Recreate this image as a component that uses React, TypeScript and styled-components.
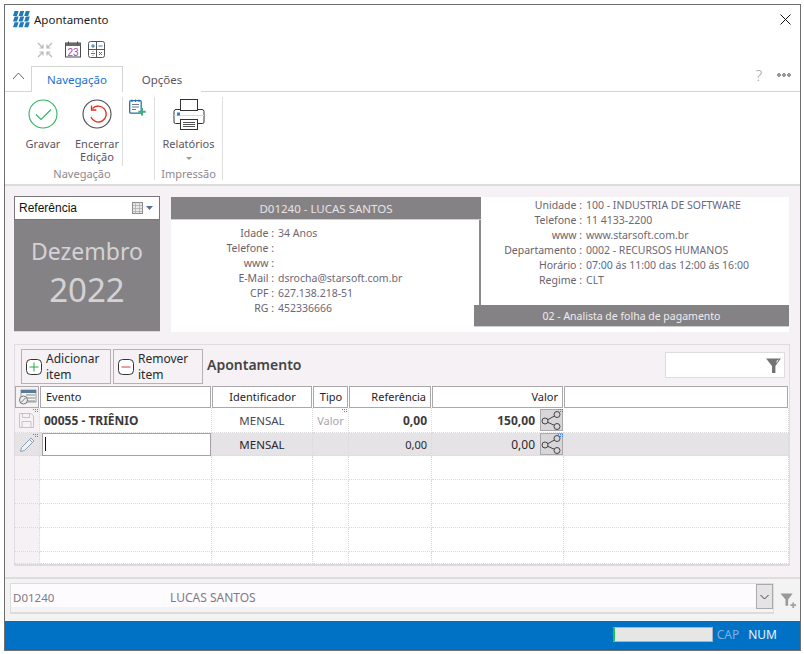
import React from "react";
import styled, { createGlobalStyle } from "styled-components";

const Global = createGlobalStyle`
  html, body { margin: 0; padding: 0; background: #fff; }
  body { font-family: "Noto Sans", "Open Sans", sans-serif; }
  * { box-sizing: border-box; }
  svg { flex: none; display: block; }
`;

const F = `"Noto Sans", "Open Sans", sans-serif`;
const L = `"Liberation Sans", Arial, sans-serif`;

const Page = styled.div`
  width: 804px;
  height: 654px;
  padding: 4px 3px 3px 4px;
`;
const Win = styled.div`
  width: 797px;
  height: 647px;
  border: 1px solid #6e6e6e;
  display: flex;
  flex-direction: column;
  background: #fff;
  font-family: ${F};
  overflow: hidden;
`;
const TitleBar = styled.div`
  height: 30px;
  display: flex;
  align-items: center;
  padding: 0 9px 2px 8px;
  font-size: 11.5px;
  color: #1a1a1a;
  gap: 4px;
`;
const TitleText = styled.span`
  flex: 1;
`;
const Qat = styled.div`
  height: 26px;
  display: flex;
  align-items: center;
  padding: 3px 0 0 32px;
  gap: 6px;
  & > :nth-child(2) {
    margin-left: 6px;
  }
`;
const TabStrip = styled.div`
  height: 31px;
  padding-top: 4px;
  display: flex;
  align-items: flex-end;
  border-bottom: 1px solid #d4d4d4;
`;
const Collapse = styled.div`
  width: 26px;
  height: 26px;
  display: flex;
  align-items: center;
  justify-content: center;
  padding-bottom: 4px;
`;
const Tab = styled.div<{ $active?: boolean }>`
  height: 26px;
  width: ${(p) => (p.$active ? "92px" : "78px")};
  display: flex;
  align-items: center;
  justify-content: center;
  font-size: 11.5px;
  color: ${(p) => (p.$active ? "#1a6fd0" : "#5a5560")};
  background: #fff;
  border: ${(p) => (p.$active ? "1px solid #d4d4d4" : "none")};
  border-bottom: none;
  margin-bottom: -1px;
`;
const TabRight = styled.div`
  margin-left: auto;
  height: 26px;
  display: flex;
  align-items: center;
  gap: 15px;
  padding: 0 9px 6px 0;
  color: #a0a0a0;
  font-size: 15px;
  font-weight: 300;
`;
const Ribbon = styled.div`
  height: 94px;
  display: flex;
  border-bottom: 2px solid #dcdcdc;
  padding-top: 5px;
  font-size: 11px;
  color: #5b5560;
`;
const Group = styled.div<{ $w: number; $open?: boolean }>`
  width: ${(p) => p.$w}px;
  height: 83px;
  border-right: ${(p) => (p.$open ? "none" : "1px solid #dedede")};
  display: flex;
  flex-direction: column;
`;
const GroupBody = styled.div<{ $divided?: boolean; $pad?: number }>`
  flex: 1;
  display: flex;
  min-height: 0;
  padding-left: ${(p) => p.$pad || 0}px;
  border-right: ${(p) => (p.$divided ? "1px solid #dedede" : "none")};
`;
const GroupLabel = styled.div<{ $shift?: number }>`
  height: 14px;
  text-align: center;
  color: #8e888e;
  font-size: 11px;
  line-height: 16px;
  padding-left: ${(p) => p.$shift || 0}px;
  white-space: nowrap;
`;
const RibbonBtn = styled.div<{ $w: number; $gap?: number }>`
  width: ${(p) => p.$w}px;
  margin-left: ${(p) => p.$gap || 0}px;
  display: flex;
  flex-direction: column;
  align-items: center;
  text-align: center;
  line-height: 13px;
  padding-top: 2px;
`;
const BtnIcon = styled.div`
  height: 30px;
  margin-bottom: 8px;
  display: flex;
  align-items: center;
  justify-content: center;
`;
const Caret = styled.div`
  width: 0;
  height: 0;
  margin-top: 7px;
  border-left: 3px solid transparent;
  border-right: 3px solid transparent;
  border-top: 3px solid #9a9a9a;
`;
const SmallTool = styled.div`
  width: 32px;
  height: 83px;
  border-right: 1px solid #dedede;
  padding: 2px 0 0 6px;
`;
const Content = styled.div`
  flex: 1;
  background: #f5f1f5;
  padding: 10px 11px 0 9px;
  display: flex;
  flex-direction: column;
  min-height: 0;
`;
const TopRow = styled.div`
  display: flex;
  gap: 11px;
  height: 136px;
`;
const DateCol = styled.div`
  width: 146px;
  display: flex;
  flex-direction: column;
`;
const RefSelect = styled.div`
  height: 24px;
  background: #fff;
  border: 1px solid #7a767a;
  display: flex;
  align-items: center;
  justify-content: space-between;
  padding: 0 4px;
  font-family: ${L};
  font-size: 12px;
  color: #111;
`;
const Month = styled.div`
  flex: 1;
  background: #858285;
  border-bottom: 1px solid #d8d8d8;
  color: #d4d2d4;
  display: flex;
  flex-direction: column;
  align-items: center;
  padding-top: 16px;
  font-size: 23px;
  line-height: 30px;
`;
const Year = styled.div`
  font-size: 33px;
  line-height: 44px;
  margin-top: 2px;
`;
const InfoGrid = styled.div`
  width: 618px;
  margin-top: 1px;
  background: #fff;
  display: grid;
  grid-template-columns: 303px 5px 2px 1fr;
  grid-template-rows: 7px 16px 85px 22px 5px;
  height: 135px;
`;
const NameHeader = styled.div`
  grid-column: 1 / 4;
  grid-row: 1 / 3;
  background: #858285;
  border-bottom: 1px solid #cfcfcf;
  color: #e6e4e6;
  font-size: 11.5px;
  line-height: 23px;
  text-align: center;
`;
const Divider = styled.div`
  grid-column: 3;
  grid-row: 3;
  background: #8c898c;
`;
const PersonInfo = styled.div`
  grid-column: 1;
  grid-row: 3 / 6;
  padding-top: 6px;
`;
const CompanyInfo = styled.div`
  grid-column: 4;
  grid-row: 1 / 4;
  padding-top: 1px;
`;
const JobFooter = styled.div`
  grid-column: 2 / 5;
  grid-row: 4;
  background: #858285;
  border-bottom: 1px solid #cfcfcf;
  color: #eeecee;
  font-size: 10.5px;
  line-height: 23px;
  text-align: center;
`;
const InfoRow = styled.div`
  height: 15px;
  display: flex;
  font-size: 10.5px;
  line-height: 15px;
  white-space: nowrap;
`;
const InfoLabel = styled.span<{ $w: number }>`
  width: ${(p) => p.$w}px;
  text-align: right;
  color: #6a626c;
  padding-right: 4px;
  flex: none;
`;
const InfoValue = styled.span`
  color: #6c6878;
`;
const TimeBlue = styled.span`
  color: #4d6c9e;
`;
const Panel = styled.div`
  margin-top: 12px;
  height: 222px;
  width: 776px;
  border: 1px solid #dfdcdf;
  border-bottom: none;
  display: flex;
  flex-direction: column;
`;
const Toolbar = styled.div`
  height: 41px;
  display: flex;
  align-items: flex-start;
  padding: 4px 4px 0 6px;
  gap: 2px;
`;
const ActionBtn = styled.div`
  width: 90px;
  height: 35px;
  border: 1px solid #b4b2b4;
  display: flex;
  align-items: center;
  padding-left: 4px;
  gap: 4px;
  font-size: 12px;
  line-height: 16px;
  color: #2a2a2a;
`;
const PanelTitle = styled.div`
  font-size: 14px;
  font-weight: 600;
  color: #444;
  line-height: 31px;
  margin-left: 2px;
  flex: 1;
`;
const Search = styled.div`
  width: 120px;
  height: 26px;
  margin-top: 3px;
  background: #fff;
  border: 1px solid #dfdcdf;
  display: flex;
  align-items: center;
  justify-content: flex-end;
  padding-right: 2px;
`;
const Table = styled.div`
  flex: 1;
  display: grid;
  grid-template-columns: 25px 172px 101px 36px 83px 132px 1fr;
  grid-template-rows: 22px 25px 23px 24px 24px 24px 24px 12px;
  background: #fff;
  border-bottom: 2px solid #dcdadc;
  min-height: 0;
`;
const Head = styled.div<{ $align?: string }>`
  background: #fff;
  border: 1px solid #aaa8aa;
  margin-right: 1px;
  font-size: 11px;
  line-height: 19px;
  color: #26222a;
  padding: 0 4px 0 5px;
  text-align: ${(p) => p.$align || "left"};
  white-space: nowrap;
`;
const CornerHead = styled(Head)`
  background: #f5f1f5;
  padding: 0;
  display: flex;
  align-items: center;
  justify-content: center;
`;
const Cell = styled.div<{ $align?: string; $sel?: boolean; $bold?: boolean; $side?: boolean; $muted?: boolean }>`
  position: relative;
  display: flex;
  align-items: center;
  justify-content: ${(p) => (p.$align === "right" ? "flex-end" : p.$align === "center" ? "center" : "flex-start")};
  background: ${(p) => (p.$sel ? "#e6e3e6" : p.$side ? "#f5f1f5" : "#fff")};
  border-right: 1px dotted #dadada;
  border-bottom: 1px dotted #dadada;
  font-size: 12px;
  font-weight: ${(p) => (p.$bold ? 700 : 400)};
  color: ${(p) => (p.$muted ? "#a9a4ab" : p.$bold ? "#3c3a3c" : p.$sel ? "#2c282e" : "#4c4850")};
  padding: 0 4px;
  white-space: nowrap;
  min-width: 0;
`;
const MidCell = styled(Cell)`
  font-size: 11.5px;
`;
const SmallCell = styled(Cell)`
  font-size: 11px;
`;
const EditCell = styled(Cell)`
  padding: 0 0 0 2px;
`;
const LinkCell = styled(Cell)`
  padding: 0 1px 0 0;
  border-right: none;
`;
const MarkerBox = styled.span`
  position: absolute;
  right: 1px;
  top: 1px;
  line-height: 0;
`;
const Editor = styled.div`
  width: 169px;
  height: 23px;
  flex: none;
  background: #fff;
  border: 1px solid #a5a3a5;
  display: flex;
  align-items: center;
  padding-left: 2px;
`;
const CaretBar = styled.span`
  width: 1px;
  height: 14px;
  background: #111;
`;
const LinkBtn = styled.div`
  width: 23px;
  height: 22px;
  margin-left: 5px;
  background: #d9d6d9;
  border: 1px solid #aaa8aa;
  display: flex;
  align-items: center;
  justify-content: center;
`;
const Footer = styled.div`
  height: 44px;
  flex: none;
  background: #f3f3f3;
  border-top: 2px solid #dedcde;
  display: flex;
  align-items: flex-start;
  padding: 4px 0 0 5px;
`;
const Combo = styled.div`
  width: 764px;
  height: 31px;
  background: #fdfbfd;
  border: 1px solid #dcdcdc;
  border-bottom-width: 2px;
  box-shadow: inset 0 -5px 0 #f3f3f3;
  display: flex;
  align-items: flex-start;
  font-size: 11.5px;
  line-height: 28px;
  color: #7e7a88;
  padding-left: 2px;
`;
const ComboCode = styled.span`
  width: 157px;
`;
const ComboName = styled.span`
  flex: 1;
  font-size: 12px;
`;
const ComboDrop = styled.div`
  width: 17px;
  height: 25px;
  background: #e6e3e6;
  border: 1px solid #aaa;
  display: flex;
  align-items: center;
  justify-content: center;
`;
const FooterFilter = styled.div`
  padding: 9px 0 0 6px;
`;
const Status = styled.div`
  height: 29px;
  flex: none;
  background: #0072c6;
  display: flex;
  align-items: center;
  justify-content: flex-end;
  padding: 0 23px 2px 0;
  font-size: 12px;
  gap: 9px;
`;
const Progress = styled.div`
  width: 100px;
  height: 15px;
  background: #e6e6e6;
  border: 1px solid #a8b4bc;
  border-left: 2px solid #1fc14a;
  margin-right: -5px;
`;
const Cap = styled.span`
  color: #7fb0dc;
`;
const Num = styled.span`
  color: #e8f2fa;
`;

const logoTiles = [0, 1, 2].flatMap((r) =>
  [0, 1, 2].map((c) => {
    const x = c * 5.6;
    const y = r * 5.6;
    return `M${x + 1.6} ${y}h4l-1.600 5h-4z`;
  })
);
const Logo = () => (
  <svg width="17" height="17" viewBox="0 0 17 17">
    <path d={logoTiles.join("")} fill="#1f7ab8" />
  </svg>
);
const CompressIcon = () => (
  <svg width="16" height="16" viewBox="0 0 16 16" fill="none" stroke="#b9b9b9" strokeWidth="1.2">
    <path d="M1 1l5 5M6 2.500V6H2.500M15 1l-5 5M10 2.500V6h3.500M1 15l5-5M6 13.500V10H2.500M15 15l-5-5M10 13.500V10h3.500" />
  </svg>
);
const CalendarIcon = () => (
  <svg width="17" height="17" viewBox="0 0 17 17">
    <rect x=".5" y="2" width="15" height="14" fill="#fff" stroke="#4a4a4a" />
    <rect x=".5" y="2" width="15" height="3" fill="#6a6a6a" />
    <path d="M3.500 .5v3M12.500 .5v3" stroke="#4a4a4a" />
    <text x="8" y="14.500" textAnchor="middle" fontSize="10" fill="#a04aa8" fontFamily={L}>23</text>
  </svg>
);
const CalcIcon = () => (
  <svg width="17" height="17" viewBox="0 0 17 17" fill="none">
    <rect x=".5" y=".5" width="16" height="16" rx="2" fill="#fff" stroke="#555" />
    <path d="M8.500 .5v16M.5 8.500h16" stroke="#555" />
    <path d="M3 5h4M5 3v4M10.500 5h4" stroke="#2a7ab8" />
    <path d="M3 12.500h4" stroke="#2a7ab8" />
    <path d="M11 11l3 3M14 11l-3 3" stroke="#2a7ab8" />
    <circle cx="5" cy="10.600" r=".5" fill="#2a7ab8" />
    <circle cx="5" cy="14.400" r=".5" fill="#2a7ab8" />
  </svg>
);
const Save = () => (
  <svg width="30" height="30" viewBox="0 0 30 30" fill="none">
    <circle cx="15" cy="15" r="14" stroke="#2fb463" strokeWidth="1.1" />
    <path d="M8 15.500l5 5 10-10" stroke="#2fb463" strokeWidth="1.1" />
  </svg>
);
const Undo = () => (
  <svg width="30" height="30" viewBox="0 0 30 30" fill="none">
    <circle cx="15" cy="15" r="14" stroke="#4a4a4a" strokeWidth="1.1" />
    <path d="M10.500 9.500a8 8 0 1 1-1.600 8.600" stroke="#e8291c" strokeWidth="1.3" />
    <path d="M9.500 6.500v4.500h4.800" stroke="#e8291c" strokeWidth="1.3" />
  </svg>
);
const NoteAdd = () => (
  <svg width="17" height="17" viewBox="0 0 17 17" fill="none">
    <rect x=".7" y="1.700" width="11.500" height="12.500" rx="1" fill="#fff" stroke="#2a6fa8" strokeWidth="1.3" />
    <path d="M3 .5v2.500M6.500 .5v2.500M10 .5v2.500" stroke="#2a6fa8" />
    <path d="M3 5.500h7M3 8h7M3 10.500h4" stroke="#6a7c8c" />
    <path d="M13 9v7.500M9.300 12.800h7.400" stroke="#3fae7c" strokeWidth="2" />
  </svg>
);
const Printer = () => (
  <svg width="32" height="31" viewBox="0 0 32 31" fill="none" stroke="#333" strokeWidth="1">
    <rect x="7.500" y=".5" width="17" height="11" fill="#fff" />
    <path d="M7.500 10.500H3a2 2 0 0 0-2 2V23a1.500 1.500 0 0 0 1.500 1.500H7.500M24.500 24.500H29.500A1.500 1.500 0 0 0 31 23V12.500a2 2 0 0 0-2-2H24.500" />
    <path d="M1 16.500H31" stroke="#d8d8d8" />
    <rect x="7.500" y="20.500" width="17" height="10" fill="#fff" />
    <path d="M10 23.500h12M10 25.500h12M10 27.500h12" stroke="#555" />
    <rect x="4" y="13.500" width="3" height="3" fill="#1e86d8" stroke="none" />
  </svg>
);
const CalSmall = () => (
  <svg width="24" height="14" viewBox="0 0 24 14" fill="none">
    <rect x="1.500" y="1.500" width="10" height="11" fill="#e8e8e8" stroke="#8a8a8a" />
    <path d="M1.500 4.500h10M1.500 7.500h10M1.500 10.500h10M4.500 1.500v11M8.500 1.500v11" stroke="#a8a8a8" strokeWidth=".7" />
    <path d="M15 5h7l-3.500 4z" fill="#54709a" />
  </svg>
);
const PlusBox = () => (
  <svg width="16" height="16" viewBox="0 0 16 16" fill="none">
    <rect x=".5" y=".5" width="15" height="15" rx="4" stroke="#333" fill="#fff" />
    <path d="M8 3.500v9M3.500 8h9" stroke="#2aa84a" />
  </svg>
);
const MinusBox = () => (
  <svg width="16" height="16" viewBox="0 0 16 16" fill="none">
    <rect x=".5" y=".5" width="15" height="15" rx="4" stroke="#333" fill="#fff" />
    <path d="M3.500 8h9" stroke="#d83a3a" />
  </svg>
);
const Funnel = () => (
  <svg width="17" height="17" viewBox="0 0 16 16">
    <path d="M1 1.500h14L9.800 8.500V15H6.600V8.500z" fill="#737373" />
    <path d="M11 3.500l2-1.300-2.200 4z" fill="#fff" />
  </svg>
);
const FunnelPlus = () => (
  <svg width="17" height="17" viewBox="0 0 18 18">
    <path d="M.5 1.500h13L8.600 8V14.500H5.800V8z" fill="#9a9a9a" />
    <path d="M14 11v6M11 14h6" stroke="#a0a0a0" strokeWidth="1.800" />
  </svg>
);
const Share = () => (
  <svg width="21" height="19" viewBox="0 0 21 19" fill="none" stroke="#444" strokeWidth="1">
    <circle cx="4" cy="10" r="3" />
    <circle cx="16" cy="3.500" r="3" />
    <circle cx="16" cy="15.500" r="3" />
    <path d="M6.800 8.700l6.500-3.600M6.800 11.300l6.500 3" />
  </svg>
);
const Pencil = () => (
  <svg width="17" height="17" viewBox="0 0 17 17" fill="none" stroke="#8aa0b4" strokeWidth="1">
    <path d="M1.500 15.500l1-4L12 2l3 3-9.500 9.500z" fill="#f2f2f2" />
    <path d="M10.500 3.500l3 3" />
  </svg>
);
const Floppy = () => (
  <svg width="15" height="15" viewBox="0 0 15 15" fill="none" stroke="#c4c4c4">
    <path d="M.5.500h11.500l2.500 2.500v11.500H.5z" />
    <path d="M3.500.500v4h7v-4M3 14.500v-6h9v6" />
  </svg>
);
const GridOpts = () => (
  <svg width="19" height="17" viewBox="0 0 19 17" fill="none">
    <rect x="3" y="1" width="15" height="12" fill="#f2f4f6" stroke="#8a8a8a" strokeWidth=".8" />
    <rect x="3" y="1" width="15" height="3" fill="#5a7a9a" />
    <path d="M8 6h9M8 9h9M8 12h9" stroke="#8a8a8a" />
    <circle cx="5.500" cy="11" r="4" fill="#eee" stroke="#777" />
    <path d="M3 13.500l5-5" stroke="#777" />
  </svg>
);
const Chevron = () => (
  <svg width="9" height="6" viewBox="0 0 9 6" fill="none" stroke="#444">
    <path d="M.5 1l4 4 4-4" />
  </svg>
);
const ChevronUp = () => (
  <svg width="13" height="8" viewBox="0 0 13 8" fill="none" stroke="#666">
    <path d="M1 7l5.500-6L12 7" />
  </svg>
);
const Close = () => (
  <svg width="11" height="11" viewBox="0 0 11 11" stroke="#111" strokeWidth="1">
    <path d="M.5.500l10 10M10.500.500l-10 10" />
  </svg>
);
const Dots = () => (
  <svg width="14" height="4" viewBox="0 0 14 4" fill="none" stroke="#555">
    <circle cx="2" cy="2" r="1.300" />
    <circle cx="7" cy="2" r="1.300" />
    <circle cx="12" cy="2" r="1.300" />
  </svg>
);
const Marker = () => (
  <MarkerBox>
    <svg width="5" height="5" viewBox="0 0 5 5" fill="#3f86e6">
      <rect x="0" y="0" width="1" height="1" />
      <rect x="2" y="0" width="1" height="1" />
      <rect x="4" y="0" width="1" height="1" />
      <rect x="4" y="2" width="1" height="1" />
      <rect x="2" y="2" width="1" height="1" />
    </svg>
  </MarkerBox>
);

const person: [string, string][] = [
  ["Idade", "34 Anos"],
  ["Telefone", ""],
  ["www", ""],
  ["E-Mail", "dsrocha@starsoft.com.br"],
  ["CPF", "627.138.218-51"],
  ["RG", "452336666"],
];
const company: [string, React.ReactNode][] = [
  ["Unidade", "100 - INDUSTRIA DE SOFTWARE"],
  ["Telefone", "11 4133-2200"],
  ["www", "www.starsoft.com.br"],
  ["Departamento", "0002 - RECURSOS HUMANOS"],
  ["Horário", <><TimeBlue>07:00</TimeBlue> ás 11:00 das 12:00 ás 16:00</>],
  ["Regime", "CLT"],
];
const heads: [string, string][] = [
  ["Evento", "left"],
  ["Identificador", "center"],
  ["Tipo", "center"],
  ["Referência", "right"],
  ["Valor", "right"],
  ["", "left"],
];

export default function App() {
  return (
    <Page>
      <Global />
      <Win>
        <TitleBar>
          <Logo />
          <TitleText>Apontamento</TitleText>
          <Close />
        </TitleBar>
        <Qat>
          <CompressIcon />
          <CalendarIcon />
          <CalcIcon />
        </Qat>
        <TabStrip>
          <Collapse><ChevronUp /></Collapse>
          <Tab $active>Navegação</Tab>
          <Tab>Opções</Tab>
          <TabRight>?<Dots /></TabRight>
        </TabStrip>
        <Ribbon>
          <Group $w={118} $open>
            <GroupBody $divided $pad={20}>
              <RibbonBtn $w={36}>
                <BtnIcon><Save /></BtnIcon>
                Gravar
              </RibbonBtn>
              <RibbonBtn $w={46} $gap={13}>
                <BtnIcon><Undo /></BtnIcon>
                Encerrar Edição
              </RibbonBtn>
            </GroupBody>
            <GroupLabel $shift={36}>Navegação</GroupLabel>
          </Group>
          <SmallTool><NoteAdd /></SmallTool>
          <Group $w={68}>
            <GroupBody>
              <RibbonBtn $w={68}>
                <BtnIcon><Printer /></BtnIcon>
                Relatórios
                <Caret />
              </RibbonBtn>
            </GroupBody>
            <GroupLabel>Impressão</GroupLabel>
          </Group>
        </Ribbon>
        <Content>
          <TopRow>
            <DateCol>
              <RefSelect>Referência<CalSmall /></RefSelect>
              <Month>
                Dezembro
                <Year>2022</Year>
              </Month>
            </DateCol>
            <InfoGrid>
              <NameHeader>D01240 - LUCAS SANTOS</NameHeader>
              <Divider />
              <PersonInfo>
                {person.map(([k, v]) => (
                  <InfoRow key={k}>
                    <InfoLabel $w={107}>{k} :</InfoLabel>
                    <InfoValue>{v}</InfoValue>
                  </InfoRow>
                ))}
              </PersonInfo>
              <CompanyInfo>
                {company.map(([k, v]) => (
                  <InfoRow key={k}>
                    <InfoLabel $w={105}>{k} :</InfoLabel>
                    <InfoValue>{v}</InfoValue>
                  </InfoRow>
                ))}
              </CompanyInfo>
              <JobFooter>02 - Analista de folha de pagamento</JobFooter>
            </InfoGrid>
          </TopRow>
          <Panel>
            <Toolbar>
              <ActionBtn><PlusBox /><span>Adicionar item</span></ActionBtn>
              <ActionBtn><MinusBox /><span>Remover item</span></ActionBtn>
              <PanelTitle>Apontamento</PanelTitle>
              <Search><Funnel /></Search>
            </Toolbar>
            <Table>
              <CornerHead><GridOpts /></CornerHead>
              {heads.map(([t, a], i) => (
                <Head key={i} $align={a}>{t}</Head>
              ))}

              <Cell $side><Floppy /><Marker /></Cell>
              <Cell $bold>00055 - TRIÊNIO</Cell>
              <MidCell $align="center">MENSAL</MidCell>
              <SmallCell $align="center" $muted>Valor<Marker /></SmallCell>
              <Cell $align="right" $bold>0,00</Cell>
              <LinkCell $align="right" $bold>150,00<LinkBtn><Share /></LinkBtn><Marker /></LinkCell>
              <Cell />

              <Cell $sel><Pencil /><Marker /></Cell>
              <EditCell $sel><Editor><CaretBar /></Editor></EditCell>
              <MidCell $sel $align="center">MENSAL</MidCell>
              <Cell $sel />
              <SmallCell $sel $align="right">0,00</SmallCell>
              <LinkCell $sel $align="right">0,00<LinkBtn><Share /></LinkBtn><Marker /></LinkCell>
              <Cell $sel />

              {Array.from({ length: 5 }).flatMap((_, r) =>
                Array.from({ length: 7 }).map((_, c) => <Cell key={`${r}-${c}`} $side={c === 0} />)
              )}
            </Table>
          </Panel>
        </Content>
        <Footer>
          <Combo>
            <ComboCode>D01240</ComboCode>
            <ComboName>LUCAS SANTOS</ComboName>
            <ComboDrop><Chevron /></ComboDrop>
          </Combo>
          <FooterFilter><FunnelPlus /></FooterFilter>
        </Footer>
        <Status>
          <Progress />
          <Cap>CAP</Cap>
          <Num>NUM</Num>
        </Status>
      </Win>
    </Page>
  );
}
